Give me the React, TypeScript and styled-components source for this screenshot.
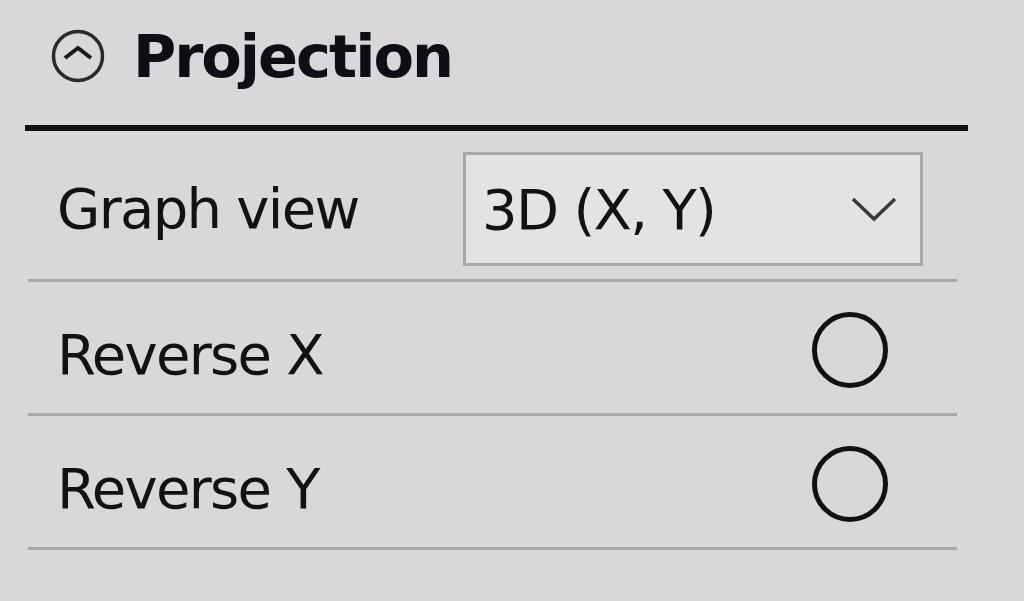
import styled, { createGlobalStyle } from "styled-components";

const GlobalStyle = createGlobalStyle`
  html, body {
    margin: 0;
    padding: 0;
    background: #d9d7da;
  }
  body {
    font-family: "DejaVu Sans", Verdana, sans-serif;
    color: #121212;
  }
`;

const Panel = styled.div`
  width: 1024px;
  height: 601px;
  overflow: hidden;
  padding-left: 25px;
  box-sizing: border-box;
`;

const Header = styled.div`
  display: flex;
  align-items: center;
  gap: 28px;
  height: 112px;
  padding: 0 0 13px 26px;
`;

const Title = styled.span`
  font-size: 59px;
  font-weight: bold;
  letter-spacing: -2px;
  color: #0e0e16;
`;

const HeaderRule = styled.div`
  width: 943px;
  height: 6px;
  background: #111;
`;

const Rows = styled.div`
  margin-left: 3px;
  width: 929px;
`;

const Row = styled.div<{ $height: number }>`
  display: flex;
  align-items: center;
  justify-content: space-between;
  height: ${(p) => p.$height}px;
  padding: 0 34px 0 29px;
  box-sizing: border-box;
  border-bottom: 3px solid #a9a9a9;
`;

const Label = styled.span<{ $drop?: number }>`
  font-size: 56px;
  letter-spacing: -1.7px;
  padding-top: ${(p) => p.$drop ?? 0}px;
`;

const Select = styled.div`
  display: flex;
  align-items: center;
  justify-content: space-between;
  width: 460px;
  height: 114px;
  margin-top: 8px;
  box-sizing: border-box;
  border: 3px solid #a7a7a7;
  background: #e3e3e3;
  padding: 0 23px 0 16px;
  font-size: 56px;
  letter-spacing: -1.7px;
`;

const Radio = styled.span`
  width: 76px;
  height: 76px;
  margin-right: 35px;
  margin-top: 4px;
  box-sizing: border-box;
  border: 5px solid #111;
  border-radius: 50%;
`;

const CollapseIcon = () => (
  <svg width="54" height="54" viewBox="0 0 54 54">
    <circle cx="27" cy="27" r="24.5" fill="none" stroke="#2a2a2a" strokeWidth="3.5" />
    <path d="M14 29 L27 19 L40 29" fill="none" stroke="#1a1a1a" strokeWidth="4" />
  </svg>
);

const ChevronDown = () => (
  <svg width="46" height="26" viewBox="0 0 46 26">
    <path d="M2 3 L23 23 L44 3" fill="none" stroke="#3a3a3a" strokeWidth="3.5" />
  </svg>
);

export default function App() {
  return (
    <>
      <GlobalStyle />
      <Panel>
        <Header>
          <CollapseIcon />
          <Title>Projection</Title>
        </Header>
        <HeaderRule />
        <Rows>
          <Row $height={151}>
            <Label $drop={6}>Graph view</Label>
            <Select>
              <span>3D (X, Y)</span>
              <ChevronDown />
            </Select>
          </Row>
          <Row $height={134}>
            <Label $drop={14}>Reverse X</Label>
            <Radio />
          </Row>
          <Row $height={134}>
            <Label $drop={14}>Reverse Y</Label>
            <Radio />
          </Row>
        </Rows>
      </Panel>
    </>
  );
}
